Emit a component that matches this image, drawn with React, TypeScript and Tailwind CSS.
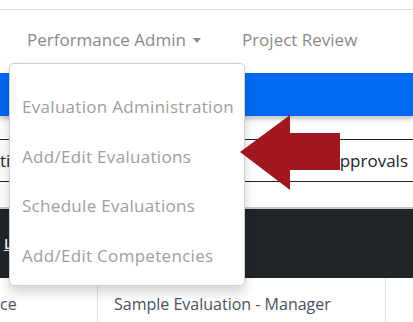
import React from "react";

const font = { fontFamily: '"Open Sans", "Liberation Sans", sans-serif' };

export default function App() {
  return (
    <div className="relative w-[413px] h-[322px] overflow-hidden bg-white" style={font}>
      {/* top line */}
      <div className="h-[10px] border-b border-[#e0e0e0]" />
      {/* nav */}
      <div className="h-[63px] flex items-center text-[17px] text-[#8a8a8a]">
        <div className="ml-[27px] -mt-[3px] flex items-center">
          <span>Performance Admin</span>
          <span className="ml-[7px] mt-[1px] w-0 h-0 border-t-[5px] border-t-[#8a8a8a] border-l-[4.5px] border-l-transparent border-r-[4.5px] border-r-transparent" />
        </div>
        <span className="ml-[41px] -mt-[3px]">Project Review</span>
      </div>
      {/* blue bar */}
      <div className="h-[43px] bg-[#0069f0] shadow-[0_3px_5px_rgba(0,0,0,0.25)]" />
      <div className="h-[23px]" />
      {/* row */}
      <div className="h-[43px] border-y border-[#222] flex items-center justify-between text-[17px] text-[#212529]">
        <span>ti</span>
        <span className="mr-[5px]">Approvals</span>
      </div>
      <div className="h-[27px] border-b-2 border-[#c8c8c8]" />
      {/* dark bar */}
      <div className="h-[69px] bg-[#212529] flex items-center">
        <span className="ml-[4px] text-[14px] text-white underline font-semibold">L</span>
      </div>
      {/* table row */}
      <div className="flex h-[52px] items-center text-[16px] text-[#4a5060]">
        <div className="w-[97px] h-full flex items-center">
          <span>ce</span>
        </div>
        <div className="w-[288px] h-full flex items-center border-l border-[#dee2e6] pl-[16px]">
          <span>Sample Evaluation - Manager</span>
        </div>
        <div className="flex-1 h-full border-l border-[#dee2e6]" />
      </div>

      {/* dropdown */}
      <div className="absolute left-[9px] top-[63px] w-[236px] h-[223px] bg-white border border-[#d0d0d0] rounded-[5px] shadow-[0_6px_12px_rgba(0,0,0,0.18)] pt-[18px] text-[17px] tracking-[0.3px] text-[#9e9e9e]">
        {["Evaluation Administration", "Add/Edit Evaluations", "Schedule Evaluations", "Add/Edit Competencies"].map((t) => (
          <div key={t} className="h-[49.5px] flex items-center pl-[12px] whitespace-nowrap">
            {t}
          </div>
        ))}
      </div>

      {/* arrow */}
      <svg className="absolute left-[240px] top-[115px]" width="100" height="75" viewBox="0 0 100 75">
        <polygon points="0,37 50,0 50,18 100,18 100,55 50,55 50,75" fill="#a0171f" />
      </svg>
    </div>
  );
}
